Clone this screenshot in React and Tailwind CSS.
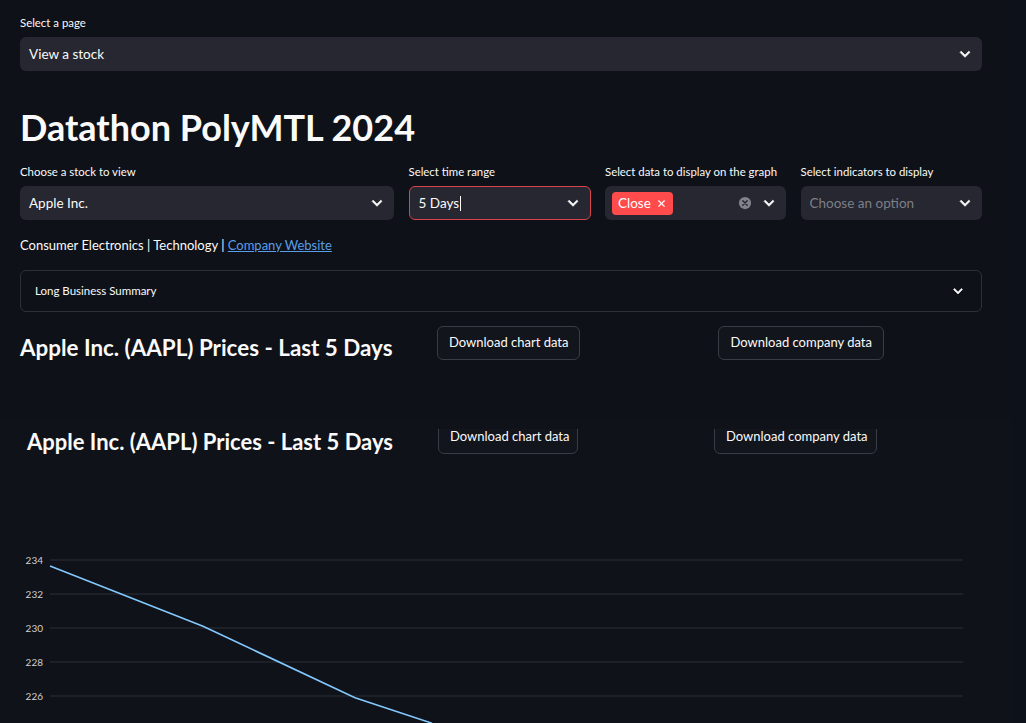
import { X } from 'lucide-react';

const Chevron = ({ className = '' }) => (
  <svg viewBox="0 0 24 24" className={`h-5 w-5 fill-current ${className}`}>
    <path d="M7.41 8.59 12 13.17l4.59-4.58L18 10l-6 6-6-6 1.41-1.41z" stroke="currentColor" strokeWidth="0.8" />
  </svg>
);

const ClearIcon = () => (
  <svg viewBox="0 0 16 16" className="h-[14px] w-[14px]">
    <circle cx="8" cy="8" r="7" fill="#80828c" />
    <path d="M5.5 5.5l5 5M10.5 5.5l-5 5" stroke="#262730" strokeWidth="1.6" strokeLinecap="round" />
  </svg>
);

function Label({ children }) {
  return <div className="mb-[7px] h-[14px] whitespace-nowrap text-[11.4px] leading-[14px] text-[#fafafa]">{children}</div>;
}

function SelectBox({ children, focused }) {
  return (
    <div
      className={`flex h-[34px] items-center justify-between rounded-md bg-[#262730] pl-[9px] pr-[7px] text-[13.5px] ${
        focused ? 'border border-[#d9444c]' : ''
      }`}
    >
      {children}
    </div>
  );
}

function DownloadButton({ children, className = '' }) {
  return (
    <button
      className={`h-[34px] shrink-0 whitespace-nowrap rounded-md border border-[#3a3c45] bg-[#12151c] px-[11px] text-[13px] text-[#fafafa] ${className}`}
    >
      {children}
    </button>
  );
}

const prices = [233.65, 230.1, 225.9, 224.4];

function PriceChart() {
  const pxPerUnit = 17;
  const yOf = (v) => 30 + (234 - v) * pxPerUnit;
  const xs = [50, 203, 355, 432];
  const ticks = [234, 232, 230, 228, 226];
  const points = prices.map((p, i) => `${xs[i]},${yOf(p)}`).join(' ');
  return (
    <svg width="1012" height="193" className="block">
      {ticks.map((t) => (
        <g key={t}>
          <line x1="50" x2="963" y1={yOf(t)} y2={yOf(t)} stroke="#2d2f36" strokeWidth="1" />
          <text x="43" y={yOf(t) + 3.5} textAnchor="end" fontSize="10" fill="#d0d0d4" fontFamily="Lato, sans-serif">
            {t}
          </text>
        </g>
      ))}
      <polyline points={points} fill="none" stroke="#83c9ff" strokeWidth="1.6" />
    </svg>
  );
}

export default function App() {
  return (
    <div className="flex min-h-screen bg-[#0e1117] text-[#fafafa] font-['Lato',sans-serif]">
      <div className="flex-1">
        <div className="pl-5 pr-[30px] pt-[16px]">
          {/* Page picker */}
          <Label>Select a page</Label>
          <SelectBox>
            <span>View a stock</span>
            <Chevron />
          </SelectBox>

          <h1 className="mt-[37px] h-[38px] text-[36px] font-bold leading-[38px]">Datathon PolyMTL 2024</h1>

          {/* Filters */}
          <div className="mt-[19px] grid grid-cols-[374px_182px_181px_181px] gap-x-[14.5px]">
            <div>
              <Label>Choose a stock to view</Label>
              <SelectBox>
                <span>Apple Inc.</span>
                <Chevron />
              </SelectBox>
            </div>
            <div>
              <Label>Select time range</Label>
              <SelectBox focused>
                <span>
                  5 Days<span className="ml-[1px] inline-block h-[15px] w-[1px] translate-y-[3px] bg-[#fafafa]" />
                </span>
                <Chevron />
              </SelectBox>
            </div>
            <div>
              <Label>Select data to display on the graph</Label>
              <SelectBox>
                <span className="-ml-[2px] flex h-[23px] items-center gap-[5px] rounded-[4px] bg-[#ff4b4b] px-[6px] text-[13.5px] text-white">
                  Close
                  <X size={11} strokeWidth={2.5} />
                </span>
                <span className="flex items-center gap-[7px]">
                  <ClearIcon />
                  <Chevron />
                </span>
              </SelectBox>
            </div>
            <div>
              <Label>Select indicators to display</Label>
              <SelectBox>
                <span className="text-[#7d7f88]">Choose an option</span>
                <Chevron />
              </SelectBox>
            </div>
          </div>

          <p className="mt-[17px] h-[16px] text-[13px] leading-[16px]">
            Consumer Electronics | Technology |{' '}
            <a className="text-[#5a9ee8] underline">Company Website</a>
          </p>

          {/* Expander */}
          <div className="mt-[17px] flex h-[42px] items-center justify-between rounded-md border border-[#2e3038] pl-[14px] pr-[14px]">
            <span className="text-[11.5px]">Long Business Summary</span>
            <Chevron className="h-[18px] w-[18px]" />
          </div>

          <div className="mt-[14px] flex h-[34px] items-center">
            <h3 className="w-[417px] pt-[10px] text-[22.4px] font-bold leading-[28px]">Apple Inc. (AAPL) Prices - Last 5 Days</h3>
            <DownloadButton>Download chart data</DownloadButton>
            <DownloadButton className="ml-[138px]">Download company data</DownloadButton>
          </div>
        </div>

        {/* Embedded chart section */}
        <div className="mt-[58px] bg-[#0f1218]">
          <div className="h-[11px]" />
          <div className="h-[25px] overflow-hidden">
            <div className="-mt-[9px] flex items-start px-[27px]">
              <h3 className="mt-[8px] w-[411px] text-[22px] font-bold leading-[28px]">Apple Inc. (AAPL) Prices - Last 5 Days</h3>
              <DownloadButton className="w-[140px] px-0 text-[12.6px]">Download chart data</DownloadButton>
              <DownloadButton className="ml-[136px] w-[163px] px-0 text-[12.6px]">Download company data</DownloadButton>
            </div>
          </div>
          <div className="h-[76px]" />
          <PriceChart />
        </div>
      </div>
      <div className="w-[14px] bg-[#0d1119]" />
    </div>
  );
}
